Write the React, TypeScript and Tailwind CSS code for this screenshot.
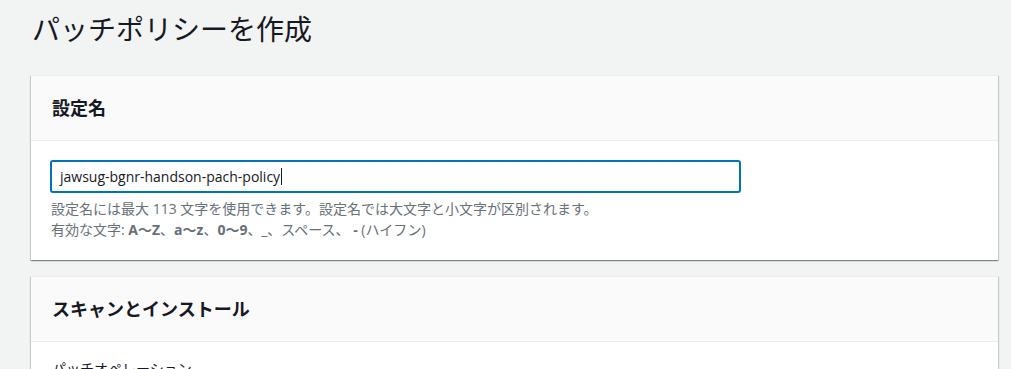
export default function App() {
  const font = "font-['Open_Sans','Noto_Sans_CJK_JP',sans-serif]";
  const card =
    "bg-white border-t border-[#eaeded] shadow-[0_1px_1px_0_rgba(0,28,36,0.3),1px_1px_1px_0_rgba(0,28,36,0.15),-1px_1px_1px_0_rgba(0,28,36,0.15)]";

  return (
    <div className={`h-[369px] overflow-hidden bg-[#f2f3f3] pl-[31px] pr-[13px] text-[#16191f] ${font}`}>
      {/* タイトル */}
      <div className="h-[75px] pt-[11px]">
        <h1 className="pl-px text-[28px] leading-[36px] font-normal">パッチポリシーを作成</h1>
      </div>

      {/* 設定名 */}
      <div className={card}>
        <div className="flex h-[65px] items-center border-b border-[#eaeded] bg-[#fafafa] pl-[21px]">
          <h2 className="text-[18px] font-bold leading-[22px]">設定名</h2>
        </div>
        <div className="pl-[19px] pt-[19px] pb-[20px]">
          <div className="flex h-[33px] w-[691px] items-center rounded-[3px] border-2 border-[#0073bb] pl-[8px] text-[14px]">
            <span>jawsug-bgnr-handson-pach-policy</span>
            <span className="ml-px h-[17px] w-px bg-[#16191f]" />
          </div>
          <div className="mt-[5px] pl-px text-[14px] leading-[21px] text-[#687078]">
            <p>設定名には最大 113 文字を使用できます。設定名では大文字と小文字が区別されます。</p>
            <p>
              有効な文字: <b>A〜Z</b>、<b>a〜z</b>、<b>0〜9</b>、<b>_</b>、スペース、 <b>-</b> (ハイフン)
            </p>
          </div>
        </div>
      </div>

      {/* スキャンとインストール */}
      <div className={`mt-4 ${card}`}>
        <div className="flex h-[65px] items-center border-b border-[#eaeded] bg-[#fafafa] pl-[21px]">
          <h2 className="text-[18px] font-bold leading-[22px]">スキャンとインストール</h2>
        </div>
        <div className="pl-[21px] pt-[16px] pb-5">
          <p className="text-[14px] leading-[22px]">パッチオペレーション</p>
        </div>
      </div>
    </div>
  );
}
